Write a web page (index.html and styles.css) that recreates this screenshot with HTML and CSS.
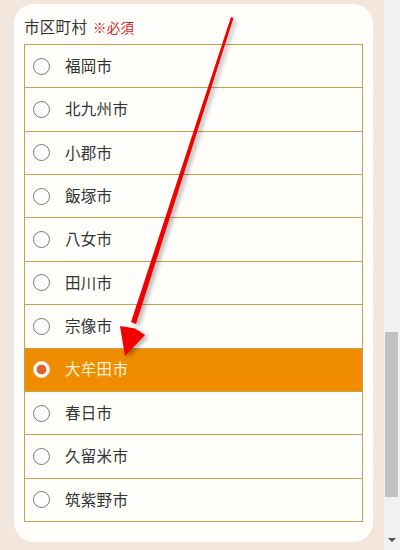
FILE: index.html
```html
<!DOCTYPE html>
<html lang="ja">
<head>
<meta charset="utf-8">
<link rel="stylesheet" href="styles.css">
</head>
<body>
<div class="page">
  <main class="main">
    <section class="card">
      <div class="label">市区町村 <span class="req">※必須</span></div>
      <ul class="list">
        <li class="row"><span class="radio"></span><span class="name">福岡市</span></li>
        <li class="row"><span class="radio"></span><span class="name">北九州市</span></li>
        <li class="row"><span class="radio"></span><span class="name">小郡市</span></li>
        <li class="row"><span class="radio"></span><span class="name">飯塚市</span></li>
        <li class="row"><span class="radio"></span><span class="name">八女市</span></li>
        <li class="row"><span class="radio"></span><span class="name">田川市</span></li>
        <li class="row"><span class="radio"></span><span class="name">宗像市</span></li>
        <li class="row selected"><span class="radio"></span><span class="name">大牟田市</span></li>
        <li class="row"><span class="radio"></span><span class="name">春日市</span></li>
        <li class="row"><span class="radio"></span><span class="name">久留米市</span></li>
        <li class="row"><span class="radio"></span><span class="name">筑紫野市</span></li>
      </ul>
    </section>
    <svg class="arrow" width="384" height="550" viewBox="0 0 384 550">
      <polygon points="231,17 233.5,18 136,324 131,322" fill="#f20000"/>
      <polygon points="120,326 135,328.5 145,335 125,356" fill="#f20000"/>
    </svg>
  </main>
  <div class="scrollbar">
    <div class="thumb"></div>
    <div class="down"></div>
  </div>
</div>
</body>
</html>
```
FILE: styles.css
```css
html, body {
  margin: 0;
  padding: 0;
  height: 100%;
  overflow: hidden;
}
body {
  background: #f3e6dd;
  font-family: "Noto Sans CJK JP", "Noto Sans", sans-serif;
  color: #333;
}
.page {
  display: flex;
  height: 550px;
}
.main {
  position: relative;
  width: 384px;
  padding: 4px 11px 0 14px;
  box-sizing: border-box;
}
.card {
  background: #fffefb;
  border-radius: 20px;
  height: 538px;
  padding: 9px 10px 0 10px;
  box-sizing: border-box;
}
.label {
  font-size: 15.5px;
  line-height: 26px;
  height: 31px;
  color: #333;
  letter-spacing: 0.3px;
}
.req {
  color: #d51a1a;
  font-size: 13.5px;
  margin-left: 2px;
}
.list {
  list-style: none;
  margin: 0;
  padding: 0;
  border: 1px solid #c4a14f;
  border-bottom: none;
}
.row {
  display: flex;
  align-items: center;
  height: 42.36px;
  border-bottom: 1px solid #c4a14f;
  background: #fffefb;
  font-size: 15.5px;
  color: #333;
}
.radio {
  width: 15px;
  height: 15px;
  border: 1.3px solid #777;
  border-radius: 50%;
  background: #fff;
  margin-left: 8px;
  margin-right: 15px;
  box-sizing: content-box;
  flex: none;
}
.name {
  line-height: 1;
  letter-spacing: 0.3px;
  margin-top: -1px;
}
.row.selected {
  background: #ef8c00;
  color: #fff4d6;
}
.row.selected .radio {
  border-color: #f6ead8;
  background: radial-gradient(circle, #e2602a 0 4.6px, #fff 5.2px);
}
.arrow {
  position: absolute;
  left: 0;
  top: 0;
  pointer-events: none;
  filter: drop-shadow(3px 2px 2px rgba(0,0,0,0.3));
}
.scrollbar {
  position: relative;
  width: 16px;
  background: #f1f1f1;
}
.thumb {
  position: absolute;
  left: 1px;
  right: 2px;
  top: 332px;
  height: 165px;
  background: #c1c1c1;
}
.down {
  position: absolute;
  left: 4px;
  top: 538px;
  width: 0;
  height: 0;
  border-left: 4px solid transparent;
  border-right: 4px solid transparent;
  border-top: 4px solid #505050;
}
```
